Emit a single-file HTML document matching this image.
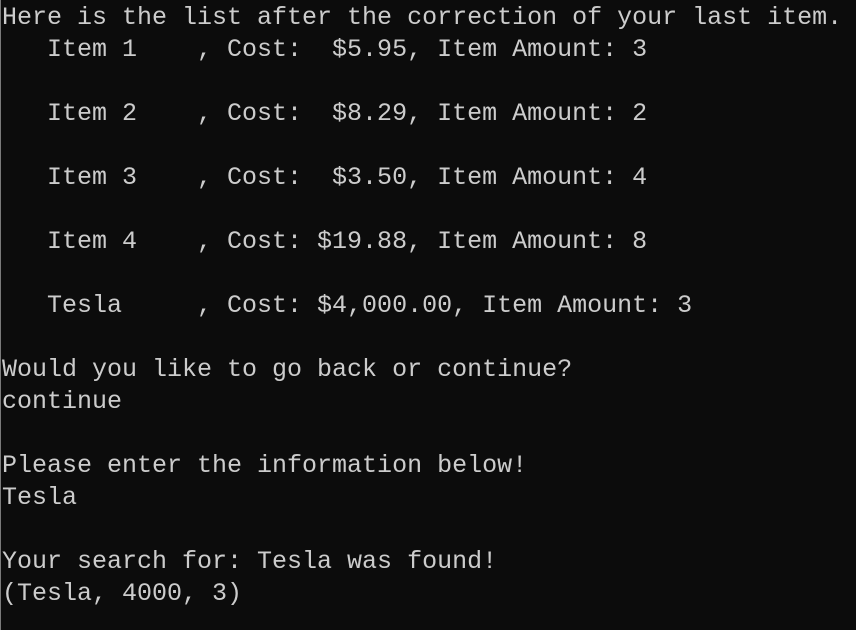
<!DOCTYPE html>
<html><head><meta charset="utf-8"><style>
html,body{margin:0;padding:0;background:#0c0c0c;width:856px;height:630px;overflow:hidden}
.l{position:absolute;left:0;top:0;width:1px;height:630px;background:#7a7a7a}
pre{position:absolute;left:2px;top:2px;margin:0;font-family:"Liberation Mono",monospace;font-size:25px;line-height:32px;color:#cccccc;white-space:pre}
</style></head><body><div class="l"></div><pre>Here is the list after the correction of your last item.
   Item 1    , Cost:  $5.95, Item Amount: 3

   Item 2    , Cost:  $8.29, Item Amount: 2

   Item 3    , Cost:  $3.50, Item Amount: 4

   Item 4    , Cost: $19.88, Item Amount: 8

   Tesla     , Cost: $4,000.00, Item Amount: 3

Would you like to go back or continue?
continue

Please enter the information below!
Tesla

Your search for: Tesla was found!
(Tesla, 4000, 3)</pre></body></html>
